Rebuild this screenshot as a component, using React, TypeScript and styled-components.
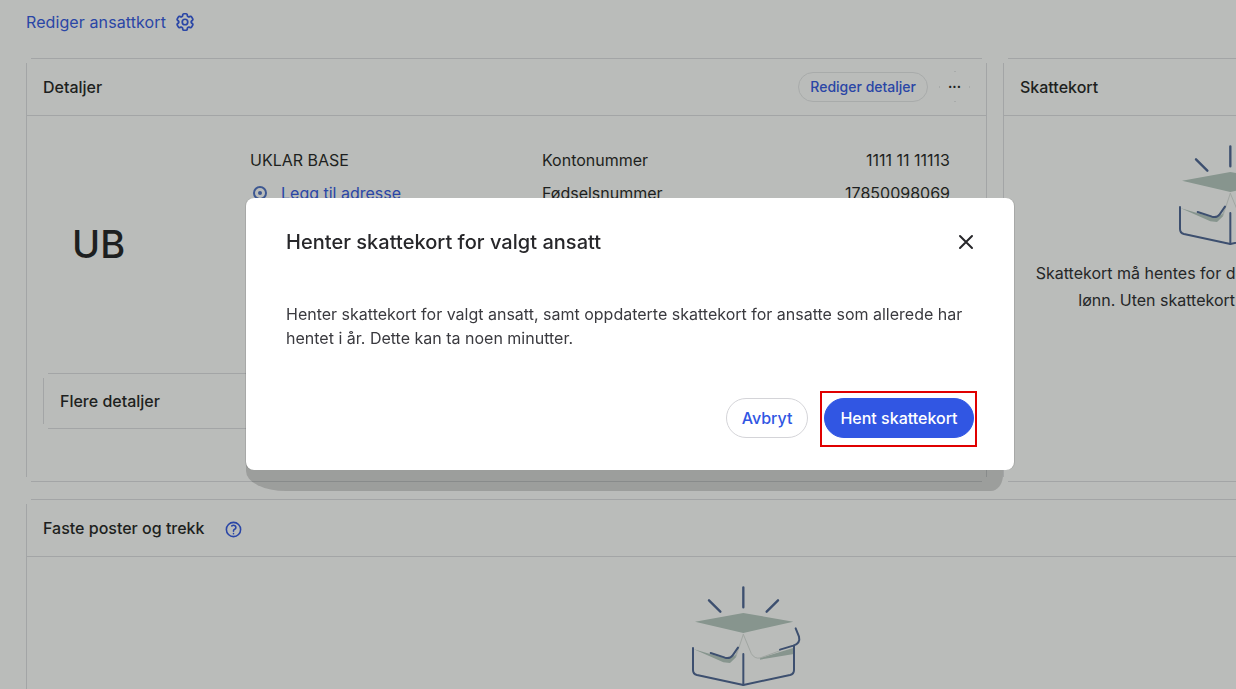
import styled, { createGlobalStyle, css } from "styled-components";
import { HiOutlineCog6Tooth, HiOutlineQuestionMarkCircle, HiOutlineXMark } from "react-icons/hi2";

const lineColor = "#dedfe2";
const blue = "#3156e3";
const textColor = "#1f1f23";

const GlobalStyle = createGlobalStyle`
    html, body {
        margin: 0;
        height: 100%;
        background: #fff;
        overflow: hidden;
    }
    body {
        font-family: Inter, "Liberation Sans", sans-serif;
        color: ${textColor};
    }
`;

// the outlines in the picture have open corners, so the four sides are drawn apart
const openCorners = (gap: number) => css`
    background-image:
        linear-gradient(${lineColor}, ${lineColor}),
        linear-gradient(${lineColor}, ${lineColor}),
        linear-gradient(${lineColor}, ${lineColor}),
        linear-gradient(${lineColor}, ${lineColor});
    background-repeat: no-repeat;
    background-size:
        calc(100% - ${gap * 2}px) 1px,
        calc(100% - ${gap * 2}px) 1px,
        1px calc(100% - ${gap * 2}px),
        1px calc(100% - ${gap * 2}px);
    background-position: center top, center bottom, left center, right center;
`;

const Page = styled.div`
    width: 1438px;
    padding: 0 0 0 26px;
`;

const EditLink = styled.a`
    height: 44px;
    margin-bottom: 14px;
    display: flex;
    align-items: center;
    gap: 8px;
    font-size: 16px;
    letter-spacing: 0.1px;
    color: ${blue};
    svg {
        width: 22px;
        height: 22px;
        stroke-width: 1.9;
    }
`;

const TopRow = styled.div`
    display: grid;
    grid-template-columns: 961px 457px;
    gap: 16px;
    margin-bottom: 17px;
`;

const Card = styled.section<{ $height?: number }>`
    ${openCorners(5)}
    height: ${(props) => (props.$height ? `${props.$height}px` : "auto")};
    display: flex;
    flex-direction: column;
`;

const CardHeader = styled.header`
    height: 58px;
    padding: 0 17px;
    box-sizing: border-box;
    border-bottom: 1px solid ${lineColor};
    display: flex;
    align-items: center;
`;

const CardTitle = styled.h2`
    margin: 0;
    font-size: 16px;
    font-weight: 450;
`;

const HeaderActions = styled.div`
    margin-left: auto;
    display: flex;
    align-items: center;
    gap: 11px;
`;

const GhostButton = styled.button`
    height: 30px;
    padding: 0 11px;
    border: 1px solid #e6e7e9;
    border-radius: 15px;
    background: none;
    font: 500 14px Inter, sans-serif;
    color: ${blue};
`;

const MoreButton = styled.button`
    width: 31px;
    height: 31px;
    padding: 0;
    border: none;
    font: 700 13px/25px Inter, sans-serif;
    color: ${textColor};
    background-color: transparent;
    background-image:
        linear-gradient(#e6e7e9, #e6e7e9),
        linear-gradient(#e6e7e9, #e6e7e9),
        linear-gradient(#e6e7e9, #e6e7e9),
        linear-gradient(#e6e7e9, #e6e7e9);
    background-repeat: no-repeat;
    background-size: 2px 1px, 2px 1px, 1px 2px, 1px 2px;
    background-position: center top, center bottom, left center, right center;
`;

const HelpIcon = styled(HiOutlineQuestionMarkCircle)`
    width: 19px;
    height: 19px;
    margin: 4px 0 0 19px;
    stroke-width: 2;
    color: ${blue};
`;

const DetailsBody = styled.div`
    flex: 1;
    display: flex;
    flex-direction: column;
    padding: 32px 17px 53px;
`;

const DetailsTop = styled.div`
    flex: 1;
    display: flex;
`;

const Initials = styled.div`
    width: 207px;
    padding: 74px 0 0 29px;
    box-sizing: border-box;
    font-size: 38px;
    font-weight: 500;
    line-height: 44px;
`;

const NameColumn = styled.div`
    width: 292px;
    display: flex;
    flex-direction: column;
    gap: 9px;
    font-size: 16px;
    line-height: 24px;
`;

const AddressLink = styled.a`
    display: flex;
    align-items: center;
    gap: 14px;
    padding-left: 3px;
    color: ${blue};
`;

const PinDot = styled.span`
    width: 14px;
    height: 14px;
    border: 2px solid #4c6fc4;
    border-radius: 50%;
    box-sizing: border-box;
    display: flex;
    align-items: center;
    justify-content: center;
    &::after {
        content: "";
        width: 4px;
        height: 4px;
        border-radius: 50%;
        background: #4c6fc4;
    }
`;

const InfoColumn = styled.dl`
    width: 408px;
    margin: 0;
    display: grid;
    grid-template-columns: 1fr auto;
    align-content: start;
    row-gap: 9px;
    font-size: 16px;
    line-height: 24px;
    dd {
        margin: 0;
        text-align: right;
    }
`;

const MoreDetails = styled.div`
    ${openCorners(5)}
    height: 56px;
    padding-left: 17px;
    display: flex;
    align-items: center;
    font-size: 16px;
    font-weight: 450;
`;

const EmptyBody = styled.div<{ $top: number }>`
    display: flex;
    flex-direction: column;
    align-items: center;
    padding-top: ${(props) => props.$top}px;
`;

const EmptyText = styled.p`
    width: 400px;
    margin: 13px 0 0;
    font-size: 16px;
    line-height: 27px;
    text-align: center;
    color: #2a2a2e;
`;

const Overlay = styled.div`
    position: fixed;
    inset: 0;
    padding: 198px 0 0 246px;
    background: rgba(25, 32, 28, 0.3);
`;

const Modal = styled.div`
    position: relative;
    width: 768px;
    height: 272px;
    padding: 0 40px;
    box-sizing: border-box;
    background: #fff;
    border-radius: 8px;
    display: flex;
    flex-direction: column;
    box-shadow:
        1px 0 0 0 rgba(0, 0, 0, 0.1),
        -1px 0 0 0 rgba(0, 0, 0, 0.1);
    &::before {
        content: "";
        position: absolute;
        left: 0;
        right: 11px;
        bottom: -21px;
        height: 60px;
        border-radius: 0 0 12px 40px / 0 0 16px 20px;
        background: rgba(0, 0, 0, 0.16);
        z-index: -1;
    }
`;

const ModalHead = styled.div`
    height: 88px;
    display: flex;
    align-items: center;
    justify-content: space-between;
`;

const ModalTitle = styled.h1`
    margin: 0;
    font-size: 20px;
    font-weight: 500;
    letter-spacing: 0.03px;
    color: #27272a;
`;

const CloseButton = styled.button`
    width: 24px;
    height: 24px;
    margin-right: -4px;
    padding: 0;
    border: none;
    background: none;
    color: #27272a;
    svg {
        width: 24px;
        height: 24px;
        stroke-width: 2;
    }
`;

const ModalText = styled.p`
    margin: 16px 0 0;
    font-size: 16px;
    line-height: 24px;
    color: #3a3a3f;
`;

const ModalFooter = styled.div`
    margin-top: 48px;
    display: flex;
    justify-content: flex-end;
    gap: 16px;
`;

const PillButton = styled.button<{ $primary?: boolean }>`
    position: relative;
    width: ${(props) => (props.$primary ? 150 : 82)}px;
    height: 40px;
    padding: 0;
    border-radius: 20px;
    border: 1px solid ${(props) => (props.$primary ? blue : "#d4d4d8")};
    background: ${(props) => (props.$primary ? blue : "#fff")};
    color: ${(props) => (props.$primary ? "#fff" : blue)};
    font: 500 16px Inter, sans-serif;
`;

const Highlight = styled.span`
    position: absolute;
    left: -5px;
    right: -4px;
    top: -8px;
    bottom: -10px;
    border: 2px solid #e00000;
`;

function BoxIcon() {
    return (
        <svg width="170" height="119" viewBox="0 0 510 357" fill="none" strokeLinecap="round" strokeLinejoin="round">
            <polygon points="105,158 250,132 400,158 250,192" fill="#b6c8c0" />
            <polygon points="100,240 150,255 205,270 226,258 232,245 228,265 210,282 190,280" fill="#b6c8c0" />
            <polygon points="300,267 402,236 402,255 300,272" fill="#b6c8c0" />
            <path d="M250 196 L228 262 M250 196 L274 254 Q284 270 300 267 L360 245" stroke="#dbe0dd" strokeWidth="3" />
            <g stroke="#4c6494" strokeWidth="7">
                <path d="M250 55 V115 M147 94 L181 128 M354 94 L320 128" />
                <path d="M99 237 V303 Q99 315 111 318 L250 348 L390 318 Q402 315 402 303 V232" strokeWidth="6" />
                <path d="M250 255 V348" strokeWidth="6" />
                <path d="M152 252 L195 266 Q210 270 218 259 L234 236" strokeWidth="6" />
                <path d="M360 242 L400 230 Q422 222 417 203 L407 178" strokeWidth="6" />
            </g>
        </svg>
    );
}

export default function App() {
    return (
        <>
            <GlobalStyle />
            <Page>
                <EditLink>
                    Rediger ansattkort
                    <HiOutlineCog6Tooth />
                </EditLink>
                <TopRow>
                    <Card $height={424}>
                        <CardHeader>
                            <CardTitle>Detaljer</CardTitle>
                            <HeaderActions>
                                <GhostButton>Rediger detaljer</GhostButton>
                                <MoreButton>···</MoreButton>
                            </HeaderActions>
                        </CardHeader>
                        <DetailsBody>
                            <DetailsTop>
                                <Initials>UB</Initials>
                                <NameColumn>
                                    <span>UKLAR BASE</span>
                                    <AddressLink>
                                        <PinDot />
                                        Legg til adresse
                                    </AddressLink>
                                </NameColumn>
                                <InfoColumn>
                                    <dt>Kontonummer</dt>
                                    <dd>1111 11 11113</dd>
                                    <dt>Fødselsnummer</dt>
                                    <dd>17850098069</dd>
                                </InfoColumn>
                            </DetailsTop>
                            <MoreDetails>Flere detaljer</MoreDetails>
                        </DetailsBody>
                    </Card>
                    <Card $height={424}>
                        <CardHeader>
                            <CardTitle>Skattekort</CardTitle>
                        </CardHeader>
                        <EmptyBody $top={12}>
                            <BoxIcon />
                            <EmptyText>
                                Skattekort må hentes for de ansatte før du kan kjøre lønn. Uten skattekort
                                trekkes 50 % skatt.
                            </EmptyText>
                        </EmptyBody>
                    </Card>
                </TopRow>
                <Card $height={300}>
                    <CardHeader>
                        <CardTitle>Faste poster og trekk</CardTitle>
                        <HelpIcon />
                    </CardHeader>
                    <EmptyBody $top={12}>
                        <BoxIcon />
                    </EmptyBody>
                </Card>
            </Page>
            <Overlay>
                <Modal>
                    <ModalHead>
                        <ModalTitle>Henter skattekort for valgt ansatt</ModalTitle>
                        <CloseButton>
                            <HiOutlineXMark />
                        </CloseButton>
                    </ModalHead>
                    <ModalText>
                        Henter skattekort for valgt ansatt, samt oppdaterte skattekort for ansatte som allerede
                        har hentet i år. Dette kan ta noen minutter.
                    </ModalText>
                    <ModalFooter>
                        <PillButton>Avbryt</PillButton>
                        <PillButton $primary>
                            Hent skattekort
                            <Highlight />
                        </PillButton>
                    </ModalFooter>
                </Modal>
            </Overlay>
        </>
    );
}
